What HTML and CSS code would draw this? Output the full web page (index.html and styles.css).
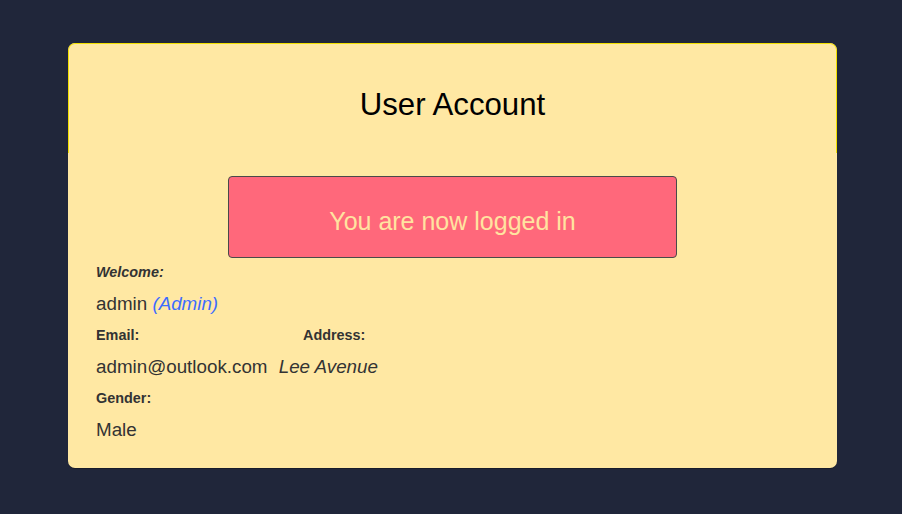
FILE: index.html
```html
<!DOCTYPE html>
<html lang="en">
<head>
<meta charset="utf-8">
<title>User Account</title>
<link rel="stylesheet" href="styles.css">
</head>
<body>
<main class="card">
  <header class="card-header">
    <h1 class="title">User Account</h1>
  </header>
  <section class="card-body">
    <div class="alert">You are now logged in</div>
    <div class="label label-em">Welcome:</div>
    <div class="value">admin <span class="role">(Admin)</span></div>
    <div class="label-row">
      <span class="label">Email:</span>
      <span class="label">Address:</span>
    </div>
    <div class="value">admin@outlook.com <span class="address">Lee Avenue</span></div>
    <div class="label">Gender:</div>
    <div class="value">Male</div>
  </section>
</main>
</body>
</html>
```
FILE: styles.css
```css
html, body {
  margin: 0;
  padding: 0;
  height: 100%;
  background: #20263a;
  font-family: "Liberation Sans", Arial, sans-serif;
}

.card {
  width: 769px;
  height: 425px;
  box-sizing: border-box;
  margin: 43px 0 0 68px;
  background: #ffe8a3;
  border-radius: 7px;
  overflow: hidden;
  box-shadow: 0 1px 0 rgba(0,0,0,0.25);
}

.card-header {
  height: 110px;
  box-sizing: border-box;
  border: 1px solid #f2e000;
  border-bottom: none;
  border-radius: 7px 7px 0 0;
  padding-top: 44px;
  text-align: center;
}

.title {
  margin: 0;
  font-size: 31.2px;
  font-weight: normal;
  line-height: 34px;
  color: #000;
}

.card-body {
  padding: 23px 28px 0 28px;
}

.alert {
  width: 449px;
  height: 82px;
  box-sizing: border-box;
  margin: 0 auto;
  background: #ff687b;
  border: 1px solid #4a4a4a;
  border-radius: 4px;
  color: #ffe3a0;
  font-size: 25px;
  display: flex;
  align-items: center;
  justify-content: center;
  padding-top: 9px;
}

.label {
  display: block;
  font-size: 14.4px;
  font-weight: bold;
  line-height: 28px;
  color: #333;
}

.label-em {
  font-style: italic;
}

.label-row {
  display: grid;
  grid-template-columns: 207px auto;
}

.value {
  font-size: 18.8px;
  line-height: 35px;
  color: #333;
}

.role {
  font-style: italic;
  color: #3d6cff;
}

.address {
  font-style: italic;
  margin-left: 6px;
}
```
